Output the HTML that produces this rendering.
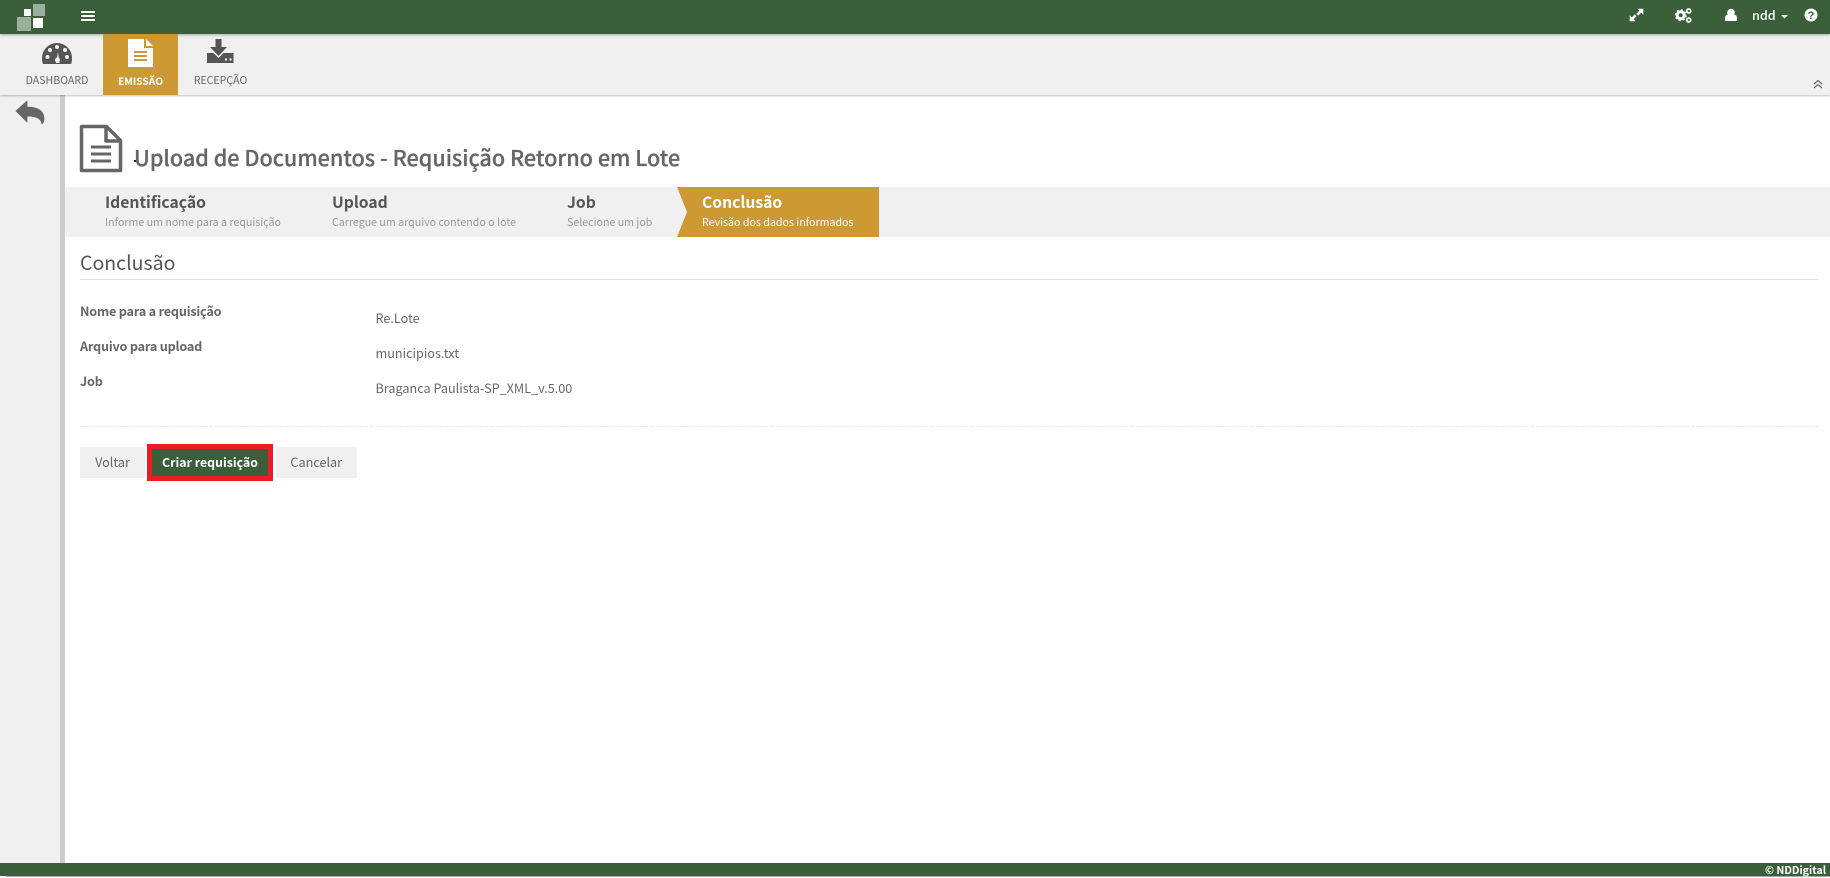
<!DOCTYPE html>
<html lang="pt-BR"><head><meta charset="utf-8"><title>Upload de Documentos</title>
<style>
html,body{margin:0;padding:0;background:#fff}
body{position:relative;width:1830px;height:877px;overflow:hidden;font-family:"Noto Sans CJK JP","Liberation Sans",sans-serif;color:#666}
.a{position:absolute;white-space:nowrap}
svg{position:absolute;display:block}
.l{font-size:12.65px;font-weight:700;line-height:20px;color:#666;left:80px;letter-spacing:-.2px}
.v{font-size:12.65px;line-height:20px;color:#666;left:375.5px}
.st{font-size:15.7px;font-weight:700;line-height:24px;top:190px;color:#555}
.ss{font-size:10.65px;line-height:16px;top:215px;color:#999}
.tb{font-size:10.6px;line-height:16px;top:73px;text-align:center;color:#666}
.btn{font-size:12.65px;line-height:30px;text-align:center;height:31px;top:447px;background:#f0f0f0;color:#666}
</style></head><body>
<div class="a" style="left:0;top:0;width:1830px;height:34px;background:#3a5f3a;box-shadow:0 1px 3px rgba(0,0,0,.3);z-index:3"></div>
<div class="a" style="left:0;top:34px;width:1830px;height:61px;background:#f0f0f0;box-shadow:0 1px 2px rgba(0,0,0,.25);z-index:2"></div>
<div class="a" style="left:0;top:95px;width:60px;height:768px;background:#f0f0f0"></div>
<div class="a" style="left:60px;top:95px;width:5px;height:768px;background:#ccc"></div>

<svg style="left:0;top:0;z-index:4" width="110" height="34">
<rect x="17" y="17" width="14" height="14" fill="#9cae9c"/><rect x="33" y="4" width="12" height="12" fill="#9cae9c"/>
<rect x="24" y="9" width="7" height="7" fill="#fff"/><rect x="33" y="18" width="10" height="10" fill="#fff"/>
<path d="M81 12h14M81 16h14M81 20h14" stroke="#fff" stroke-width="2"/>
</svg>

<svg style="left:1620px;top:0;z-index:4" width="210" height="34" fill="#fff">
<path d="M23 9v5l-1.800-1.800-3 3-1.400-1.400 3-3L18 9zM10 21v-5l1.800 1.800 3-3 1.400 1.400-3 3 1.800 1.800z" stroke="#fff" stroke-width=".6"/>
<circle cx="60.700" cy="15.300" r="3.500" fill="none" stroke="#fff" stroke-width="3"/><circle cx="60.700" cy="15.300" r="5.200" fill="none" stroke="#fff" stroke-width="1.600" stroke-dasharray="2 2.080"/>
<circle cx="68.700" cy="11" r="2" fill="none" stroke="#fff" stroke-width="1.800"/><circle cx="68.700" cy="20" r="2" fill="none" stroke="#fff" stroke-width="1.800"/>
<circle cx="111" cy="12.500" r="3.800"/><path d="M105 21v-3q0-3 3-3.500h6q3 .5 3 3.500v3z"/>
<path d="M161 15h7l-3.500 3.500z"/>
<circle cx="191" cy="15" r="6.500"/>
<text x="191" y="19" font-size="11" font-weight="700" fill="#3a5f3a" text-anchor="middle" font-family="Liberation Sans">?</text>
</svg>
<div class="a" style="left:1752px;top:5px;font-size:12.6px;font-weight:500;line-height:20px;color:#fff;z-index:4">ndd</div>

<svg style="left:1810px;top:78px;z-index:4" width="16" height="12" fill="none" stroke="#666" stroke-width="1.200"><path d="M4 6l4-3.500 4 3.500M4 10l4-3.500 4 3.500"/></svg>

<div class="a" style="left:103px;top:34px;width:75px;height:61px;background:#cc9933;z-index:3"></div>
<svg style="left:0;top:34px;z-index:4" width="260" height="40">
<path d="M43 30q-1-2-1-6a15 15 0 0 1 30 0q0 4-1 6z" fill="#555"/>
<circle cx="47.500" cy="23" r="2" fill="#f0f0f0"/><circle cx="50" cy="16" r="2" fill="#f0f0f0"/><circle cx="57" cy="13" r="2" fill="#f0f0f0"/><circle cx="65" cy="16" r="2" fill="#f0f0f0"/><circle cx="67" cy="23" r="2" fill="#f0f0f0"/>
<path d="M56 29l2-11 1.500 11z" fill="#f0f0f0"/><circle cx="57.500" cy="26" r="2.500" fill="#f0f0f0"/>
<path d="M128 5h16v9h9v19h-25z" fill="#fff"/><path d="M146 5l7 7h-7z" fill="#fff"/>
<path d="M134 18h13M134 22h13M134 26h13" stroke="#cc9933" stroke-width="2"/>
<path d="M215.500 5h6v8h5.500l-8.500 9-8.500-9h5.500z" fill="#555"/>
<path d="M207 19h6.500l5 5 5-5h10v10h-26.500z" fill="#555"/>
<circle cx="226" cy="25.500" r="1.200" fill="#f0f0f0"/><circle cx="230.500" cy="25.500" r="1.200" fill="#f0f0f0"/>
</svg>
<div class="a tb" style="left:25px;width:64px;z-index:4">DASHBOARD</div>
<div class="a tb" style="left:103px;width:75px;color:#fff;font-weight:700;font-size:10.2px;z-index:4">EMISSÃO</div>
<div class="a tb" style="left:185px;width:71px;z-index:4">RECEPÇÃO</div>

<svg style="left:14px;top:98px" width="34" height="30"><path d="M2 13L13 3v6q16 0 17 11 0 4-2 6-1-8-15-8v6z" fill="#666" stroke="#666" stroke-width=".8" stroke-linejoin="round"/></svg>

<svg style="left:78px;top:123px" width="46" height="52" fill="none" stroke="#666" stroke-width="3.500" stroke-linejoin="round">
<path d="M3.500 3.500h25l14 14v30h-39z"/><path d="M28 3.500v14.500h14"/>
<path d="M13 24h20M13 31h20M13 38h20" stroke-width="3"/>
</svg>
<div class="a" style="left:134px;top:142px;font-size:21.6px;font-weight:500;line-height:32px;color:#666;-webkit-text-stroke:.25px #666">Upload de Documentos - Requisição Retorno em Lote</div>
<div class="a" style="left:134px;top:160px;width:2px;height:2px;background:#222"></div>

<div class="a" style="left:65px;top:187px;width:1765px;height:50px;background:#f0f0f0"></div>
<svg style="left:677px;top:187px" width="202" height="50"><path d="M0 0H202V50H0L10 25z" fill="#cc9933"/></svg>
<div class="a st" style="left:105px">Identificação</div><div class="a ss" style="left:105px">Informe um nome para a requisição</div>
<div class="a st" style="left:332px">Upload</div><div class="a ss" style="left:332px">Carregue um arquivo contendo o lote</div>
<div class="a st" style="left:567px">Job</div><div class="a ss" style="left:567px">Selecione um job</div>
<div class="a st" style="left:702px;color:#fff">Conclusão</div><div class="a ss" style="left:702px;color:#fff">Revisão dos dados informados</div>

<div class="a" style="left:80px;top:249px;font-size:19.5px;line-height:26px;font-weight:400;color:#555">Conclusão</div>
<div class="a" style="left:80px;top:279px;width:1738px;height:1px;background:#e3e3e3"></div>

<div class="a l" style="top:301px">Nome para a requisição</div><div class="a v" style="top:308px">Re.Lote</div>
<div class="a l" style="top:336px">Arquivo para upload</div><div class="a v" style="top:343px">municipios.txt</div>
<div class="a l" style="top:371px">Job</div><div class="a v" style="top:378px">Braganca Paulista-SP_XML_v.5.00</div>
<div class="a" style="left:80px;top:426px;width:1739px;border-top:1px dashed #e8e8e8"></div>

<div class="a btn" style="left:80px;width:65px">Voltar</div>
<div class="a" style="left:147px;top:444px;width:116px;height:27px;background:#3a5f3a;border:5px solid #ed1c24;line-height:26px;text-align:center;font-size:12.35px;font-weight:700;color:#fff">Criar requisição</div>
<div class="a btn" style="left:275.5px;width:81.5px">Cancelar</div>

<div class="a" style="left:0;top:863px;width:1830px;height:13px;background:#3a5f3a"></div>
<div class="a" style="left:6px;top:876px;width:1824px;height:1px;background:#a3adb3"></div>
<div class="a" style="left:1765px;top:863px;font-size:10.6px;font-weight:700;line-height:15px;color:#fff">© NDDigital</div>
</body></html>
